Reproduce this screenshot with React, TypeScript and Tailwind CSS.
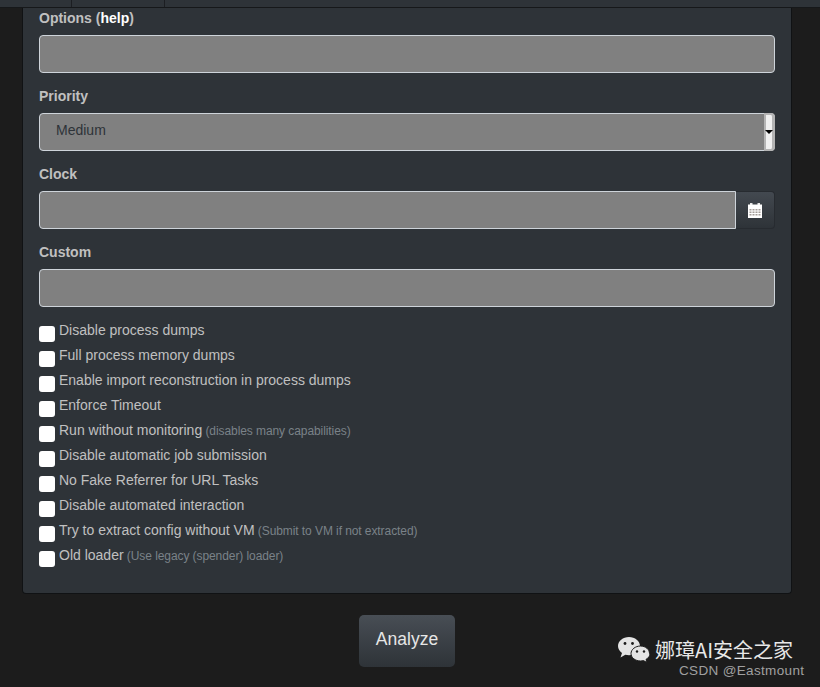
const CHECKS = [
    { label: 'Disable process dumps' },
    { label: 'Full process memory dumps' },
    { label: 'Enable import reconstruction in process dumps' },
    { label: 'Enforce Timeout' },
    { label: 'Run without monitoring', note: '(disables many capabilities)' },
    { label: 'Disable automatic job submission' },
    { label: 'No Fake Referrer for URL Tasks' },
    { label: 'Disable automated interaction' },
    { label: 'Try to extract config without VM', note: '(Submit to VM if not extracted)' },
    { label: 'Old loader', note: '(Use legacy (spender) loader)' },
];

const inputClass = 'block h-[38px] w-full rounded-[4px] border border-[#ced4da] bg-[#808080] px-3 text-[14px] text-[#2e3338] outline-none';

function Field({ label, children }: { label: React.ReactNode; children: React.ReactNode }) {
    return (
        <div className="mb-[13px]">
            <label className="mb-[6px] block h-[21px] text-[14px] leading-[21px] font-bold text-[#c0c0c0]">{label}</label>
            {children}
        </div>
    );
}

export default function App() {
    return (
        <div className="relative h-[687px] w-[820px] overflow-hidden bg-[#1c1c1c] font-['Liberation_Sans',Arial,sans-serif]">
            <div className="flex h-[8px] border-b border-[#16181a] bg-[#2e3338]">
                <div className="w-[72px] border-r border-[#1c1e22]" />
                <div className="w-[93px] border-r border-[#1c1e22]" />
            </div>

            <div className="mx-[22px] h-[586px] w-[770px] rounded-b-[4px] border border-t-0 border-[#101214] bg-[#2e3338] px-[16px]">
                <Field label={<>Options (<a className="text-white">help</a>)</>}>
                    <input className={inputClass} />
                </Field>
                <Field label="Priority">
                    <div className="relative">
                        <select className={`${inputClass} appearance-none pb-[4px] pl-4`} defaultValue="Medium">
                            <option>Medium</option>
                        </select>
                        <div className="absolute top-0 right-0 flex h-[38px] w-[11px] items-center justify-center rounded-r-[4px] border-y-[2px] border-r-[3px] border-l-[2px] border-[#b4b4b4] bg-[#f0f0f0]">
                            <span className="h-0 w-0 border-x-[4px] border-t-[4px] border-x-transparent border-t-black" />
                        </div>
                    </div>
                </Field>
                <Field label="Clock">
                    <div className="flex h-[38px]">
                        <input className="h-[38px] min-w-0 flex-1 rounded-l-[4px] border border-[#ced4da] bg-[#808080] outline-none" />
                        <span className="flex w-[39px] items-center justify-center rounded-r-[4px] border border-l-0 border-[#272b30] bg-gradient-to-b from-[#434950] to-[#2e3338]">
                            <svg width="14" height="15" viewBox="0 0 14 15">
                                <rect x="2" y="0" width="2.500" height="3" fill="#e8e8e8" />
                                <rect x="9.500" y="0" width="2.500" height="3" fill="#e8e8e8" />
                                <rect x="0" y="1.500" width="14" height="13.500" fill="#ffffff" />
                                <path d="M1.500 6h2v1.500h-2zM4.500 6h2v1.500h-2zM7.500 6h2v1.500h-2zM10.500 6h2v1.500h-2zM1.500 8.500h2V10h-2zM4.500 8.500h2V10h-2zM7.500 8.500h2V10h-2zM10.500 8.500h2V10h-2zM1.500 11h2v1.500h-2zM4.500 11h2v1.500h-2zM7.500 11h2v1.500h-2zM10.500 11h2v1.500h-2z" fill="#a39c98" />
                            </svg>
                        </span>
                    </div>
                </Field>
                <Field label="Custom">
                    <input className={inputClass} />
                </Field>

                <div className="mt-[10px]">
                    {CHECKS.map((c) => (
                        <div key={c.label} className="flex h-[25px] gap-[4px]">
                            <span className="mt-[6px] h-[16px] w-[16px] shrink-0 rounded-[3px] bg-white" />
                            <label className="text-[14px] leading-[21px] text-[#c0c0c0]">
                                {c.label}
                                {c.note && <small className="text-[12px] tracking-[-0.08px] text-[#7a8288]"> {c.note}</small>}
                            </label>
                        </div>
                    ))}
                </div>
            </div>

            <div className="mt-[21px] flex justify-center pr-[6px]">
                <button className="h-[52px] w-[96px] rounded-[5px] bg-gradient-to-b from-[#484e55] to-[#2e3338] pb-[4px] text-[17.500px] text-[#e6e6e6]">
                    Analyze
                </button>
            </div>

            <div className="absolute top-[636px] left-[617px] flex items-center gap-[5px]">
                <svg width="33" height="28" viewBox="0 0 33 28" fill="#e4e4e4">
                    <path d="M12 1C5.900 1 1 5 1 10c0 2.800 1.500 5.200 4 6.900L3.500 21.500l4.800-2.800c1.200.3 2.400.5 3.700.5C18 19.200 23 15 23 10S18 1 12 1z" />
                    <circle cx="8" cy="7.500" r="1.400" fill="#1c1c1c" />
                    <circle cx="15.500" cy="7.500" r="1.400" fill="#1c1c1c" />
                    <path d="M32.500 17.500c0-4.100-4-7.500-9-7.500s-9.500 3.400-9.500 7.500 4.300 7.500 9.500 7.500c1 0 2-.1 3-.4l3.500 2-1-3.200c2.500-1.400 4-3.500 4-5.900z" stroke="#1c1c1c" strokeWidth="1" />
                    <circle cx="20" cy="15.500" r="1.200" fill="#1c1c1c" />
                    <circle cx="27" cy="15.500" r="1.200" fill="#1c1c1c" />
                </svg>
                <span className="text-[20px] leading-[26px] text-[#e8e8e8] font-['Noto_Sans_CJK_SC',sans-serif]">娜璋AI安全之家</span>
            </div>
            <div className="absolute top-[663px] left-[679px] text-[13.500px] leading-[16px] tracking-[0.34px] text-[#a0a0a0]">CSDN @Eastmount</div>
        </div>
    );
}
